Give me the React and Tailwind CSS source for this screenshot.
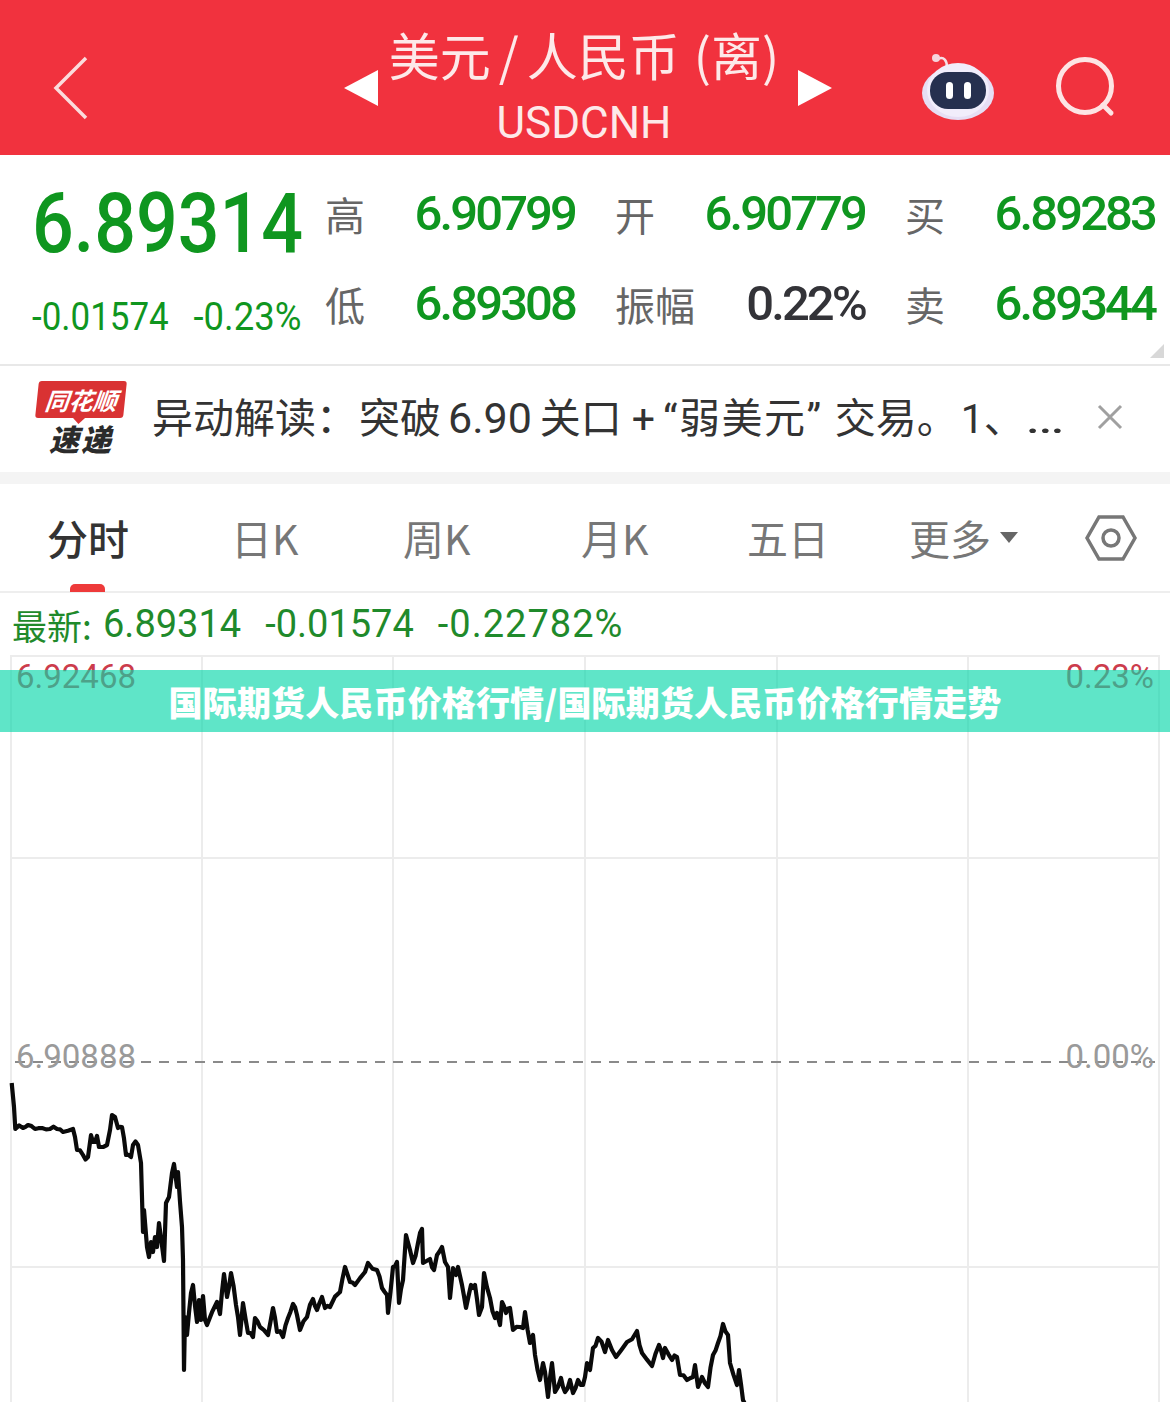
import React from 'react';

const cjk = '"Noto Sans CJK SC", "Noto Sans", sans-serif';
const latinFirst = 'Roboto, "Noto Sans CJK SC", sans-serif';

// price line, read off the screenshot in page pixels
const linePoints = `11.7,1083 14,1107 15.3,1129 23,1128 28,1125 35,1129 42,1128 50,1129 57,1129 63,1132 73,1129 75,1137 77,1150 83,1155 88,1157 91,1135 93,1142 97,1136 99,1147 107,1145 110,1130 112,1115 115,1117 118,1128 122,1127 126,1155 131,1157 133,1145 138,1145 141,1163 143,1232 144,1210 147,1247 149,1257 151,1242 153,1252 155,1237 157,1247 159,1223 164,1261 166,1203 169,1197 172,1173 174,1164 177,1187 178,1172 182,1227 183,1260 184,1370 185,1317 187,1335 191,1293 193,1285 197,1322 199,1300 201,1320 203,1296 205,1320 207,1325 217,1302 220,1314 224,1274 227,1297 231,1273 236,1305 240,1335 243,1303 248,1333 253,1337 255,1318 260,1327 268,1335 273,1308 277,1332 283,1337 288,1318 293,1304 297,1315 300,1330 307,1317 313,1299 317,1310 322,1297 325,1308 330,1307 340,1292 345,1267 350,1282 355,1285 365,1272 368,1263 377,1270 382,1288 387,1295 388,1313 393,1267 397,1262 399,1303 403,1280 406,1235 410,1250 413,1263 418,1243 422,1229 423,1263 430,1259 434,1270 437,1255 442,1247 445,1262 448,1267 450,1298 453,1268 456,1275 458,1267 462,1285 466,1308 471,1285 475,1285 479,1315 482,1307 484,1273 490,1298 495,1318 497,1313 500,1325 502,1302 506,1313 510,1308 513,1330 520,1327 523,1328 525,1312 530,1343 533,1335 535,1355 540,1380 543,1363 545,1372 548,1397 552,1363 555,1392 561,1378 565,1392 570,1380 573,1393 578,1380 583,1385 587,1363 590,1370 593,1348 598,1338 605,1352 608,1340 616,1357 627,1342 637,1331 642,1353 652,1366 659,1345 663,1358 665,1348 672,1360 677,1357 680,1375 687,1380 693,1377 695,1365 698,1387 702,1377 708,1387 713,1355 718,1343 723,1324 728,1335 730,1363 737,1385 739,1370 743,1400 745,1404`;

// adds small wiggles between the read-off points so the line looks as noisy as the chart
const noisyLine = () => {
  const pts = linePoints.split(' ').map((p) => p.split(',').map(Number));
  const out = [];
  pts.forEach(([x, y], i) => {
    out.push(`${x},${y}`);
    const next = pts[i + 1];
    if (next && next[0] - x > 3) {
      const wiggle = Math.sin(i * 12.9898) * 43758.5453;
      const offset = (wiggle - Math.floor(wiggle) - 0.5) * 7;
      out.push(`${(x + next[0]) / 2},${(y + next[1]) / 2 + offset}`);
    }
  });
  return out.join(' ');
};

const Stat = ({ label, value, dark }) => (
  <div className="flex w-[250px] items-center justify-between">
    <span className="text-[40px] leading-none text-[#666666]" style={{ fontFamily: cjk }}>{label}</span>
    <span className={`font-['Roboto'] text-[49px] font-medium leading-none tracking-[-2.9px] ${dark ? 'text-[#333338]' : 'text-[#0f961f]'}`}>{value}</span>
  </div>
);

const Robot = () => (
  <svg width="76" height="70" viewBox="0 0 76 70">
    <path d="M18 7 C24 4 27 9 27 15" fill="none" stroke="#f6dfe6" strokeWidth="2.5" />
    <circle cx="16" cy="6" r="4" fill="#f6d5dc" />
    <ellipse cx="38" cy="41" rx="36" ry="27" fill="#e6def4" />
    <ellipse cx="38" cy="38" rx="31" ry="27" fill="#f1edfb" />
    <rect x="10" y="20" width="56" height="37" rx="18" fill="#26304f" />
    <rect x="26" y="30" width="7" height="17" rx="3.5" fill="#ffffff" />
    <rect x="44" y="30" width="7" height="17" rx="3.5" fill="#ffffff" />
  </svg>
);

export default function App() {
  return (
    <div className="relative h-[1402px] w-[1170px] overflow-hidden bg-white" style={{ fontFamily: cjk }}>
      <header className="flex h-[155px] items-center bg-[#f1323e] text-[#fde9e9]">
        <svg className="ml-[53px] mt-[20px]" width="36" height="64" viewBox="0 0 36 64" fill="none" stroke="#fbdcdc" strokeWidth="3.5">
          <path d="M33 2 L3 32 L33 62" />
        </svg>
        <div className="ml-[255px] mt-[20px] h-0 w-0 border-y-[18px] border-r-[34px] border-y-transparent border-r-white" />
        <div className="ml-[12px] flex w-[388px] flex-col items-center">
          <div className="mt-[16px] flex items-baseline whitespace-nowrap text-[51px] leading-[62px]">
            <span>美元</span>
            <span className="mx-[8px]">/</span>
            <span>人民币</span>
            <span className="ml-[14px]">(离)</span>
          </div>
          <div className="mt-[13px] font-['Roboto'] text-[44px] leading-[50px]">USDCNH</div>
        </div>
        <div className="ml-[20px] mt-[20px] h-0 w-0 border-y-[18px] border-l-[34px] border-y-transparent border-l-white" />
        <div className="ml-[88px] mt-[18px]"><Robot /></div>
        <svg className="ml-[57px] mt-[20px]" width="66" height="66" viewBox="0 0 66 66" fill="none" stroke="#fde4e4" strokeWidth="5">
          <circle cx="32" cy="31" r="26.5" />
          <path d="M50 50 L58 58" strokeLinecap="round" />
        </svg>
      </header>

      <section className="relative flex h-[211px] border-b-2 border-[#e8e8e8] pl-[32px]">
        <div className="w-[293px]">
          <div className="mt-[25px] origin-left scale-x-[0.875] font-['Roboto'] text-[84px] font-medium leading-[88px] text-[#0f961f]">6.89314</div>
          <div className="mt-[27px] flex justify-between pr-[24px] font-['Roboto'] text-[38px] leading-[44px] text-[#0f961f]">
            <span className="origin-left scale-x-[0.92]">-0.01574</span>
            <span className="origin-right scale-x-[0.96]">-0.23%</span>
          </div>
        </div>
        <div className="mt-[34px] flex flex-col gap-[41px]">
          <div className="flex gap-[40px]">
            <Stat label="高" value="6.90799" />
            <Stat label="开" value="6.90779" />
            <Stat label="买" value="6.89283" />
          </div>
          <div className="flex gap-[40px]">
            <Stat label="低" value="6.89308" />
            <Stat label="振幅" value="0.22%" dark />
            <Stat label="卖" value="6.89344" />
          </div>
        </div>
        <div className="absolute bottom-[6px] right-[6px] h-0 w-0 border-b-[14px] border-l-[14px] border-b-[#d8d8d8] border-l-transparent" />
      </section>

      <section className="flex h-[106px] items-center">
        <div className="ml-[36px] mt-[-4px] flex w-[90px] flex-col items-center">
          <div className="relative flex h-[37px] w-[88px] -skew-x-6 items-center justify-center rounded-[3px] bg-[#d93233]">
            <span className="whitespace-nowrap text-[24px] font-bold italic leading-none text-white">同花顺</span>
            <div className="absolute -bottom-[6px] left-[38px] h-0 w-0 border-x-[6px] border-t-[6px] border-x-transparent border-t-[#d93233]" />
          </div>
          <span className="mt-[5px] text-[30px] font-black italic leading-[30px] tracking-[2px] text-[#2b2b2b]">速递</span>
        </div>
        <div className="ml-[26px] mt-[-2px] w-[919px] whitespace-nowrap text-[41px] leading-none text-[#333333]" style={{ fontFamily: latinFirst }}>
          异动解读：<span className="ml-[2px]">突破</span>
          <span className="ml-[7px] text-[43px]">6.90</span>
          <span className="ml-[8px]">关口</span>
          <span className="ml-[10px]">+</span>
          <span className="ml-[8px] tracking-[1.5px]">“弱美元”</span>
          <span className="ml-[12px]">交易。</span>
          <span className="ml-[3px]">1、</span>
          <span className="inline-block origin-left scale-x-[1.45]">…</span>
        </div>
        <svg className="ml-[26px] mt-[-4px]" width="26" height="26" viewBox="0 0 26 26" stroke="#a0a0a0" strokeWidth="3">
          <path d="M2 2 L24 24 M24 2 L2 24" />
        </svg>
      </section>

      <div className="h-[12px] bg-[#f4f4f4]" />

      <nav className="flex h-[109px] items-center border-b-2 border-[#eeeeee] text-[41px] text-[#777777]">
        <div className="relative ml-[47px] w-[184px] font-medium text-[#333333]">
          分时
          <div className="absolute -bottom-[24px] left-[23px] h-[8px] w-[35px] rounded-t-[5px] bg-[#ee3a3a]" />
        </div>
        <div className="w-[172px]">日K</div>
        <div className="w-[178px]">周K</div>
        <div className="w-[166px]">月K</div>
        <div className="w-[162px]">五日</div>
        <div className="flex w-[176px] items-center">
          更多
          <div className="ml-[9px] h-0 w-0 border-x-[9px] border-t-[11px] border-x-transparent border-t-[#666666]" />
        </div>
        <svg width="52" height="48" viewBox="0 0 52 48" fill="none" stroke="#777777" strokeWidth="3.5">
          <path d="M14 3 H38 L50 24 L38 45 H14 L2 24 Z" />
          <circle cx="26" cy="24" r="8" />
        </svg>
      </nav>

      <div className="flex h-[62px] items-center pl-[12px] text-[#1f8a2b]">
        <span className="w-[91px] text-[35px] leading-none">最新:</span>
        <span className="font-['Roboto'] text-[38px] leading-none">6.89314</span>
        <span className="ml-[24px] font-['Roboto'] text-[38px] leading-none">-0.01574</span>
        <span className="ml-[24px] font-['Roboto'] text-[38px] leading-none tracking-[1px]">-0.22782%</span>
      </div>

      <div className="relative h-[747px]">
        <svg className="block" width="1170" height="747" viewBox="0 655 1170 747" fill="none">
          <g stroke="#ececec" strokeWidth="2">
            <path d="M11 655 V1402 M202 655 V1402 M393 655 V1402 M585 655 V1402 M777 655 V1402 M968 655 V1402 M1159 655 V1402" />
            <path d="M11 656 H1159 M11 858 H1159 M11 1267 H1159" />
          </g>
          <path d="M15 1062 H1155" stroke="#8a8a8a" strokeWidth="2" strokeDasharray="10 8" />
          <polyline points={noisyLine()} stroke="#0a0a0a" strokeWidth="4.2" strokeLinejoin="round" />
        </svg>
        <span className="absolute left-[16px] top-[5px] font-['Roboto'] text-[33px] leading-none text-[#cc3c4c]">6.92468</span>
        <span className="absolute right-[16px] top-[5px] font-['Roboto'] text-[33px] leading-none text-[#cc3c4c]">0.23%</span>
        <span className="absolute left-[16px] top-[385px] font-['Roboto'] text-[33px] leading-none text-[#9a9a9a]">6.90888</span>
        <span className="absolute right-[16px] top-[385px] font-['Roboto'] text-[33px] leading-none text-[#9a9a9a]">0.00%</span>
      </div>

      <div className="absolute left-0 top-[670px] flex h-[62px] w-full items-center justify-center bg-[#09d7aa]/65 text-[34px] font-black tracking-[0.15px] text-white">
        国际期货人民币价格行情/国际期货人民币价格行情走势
      </div>
    </div>
  );
}
